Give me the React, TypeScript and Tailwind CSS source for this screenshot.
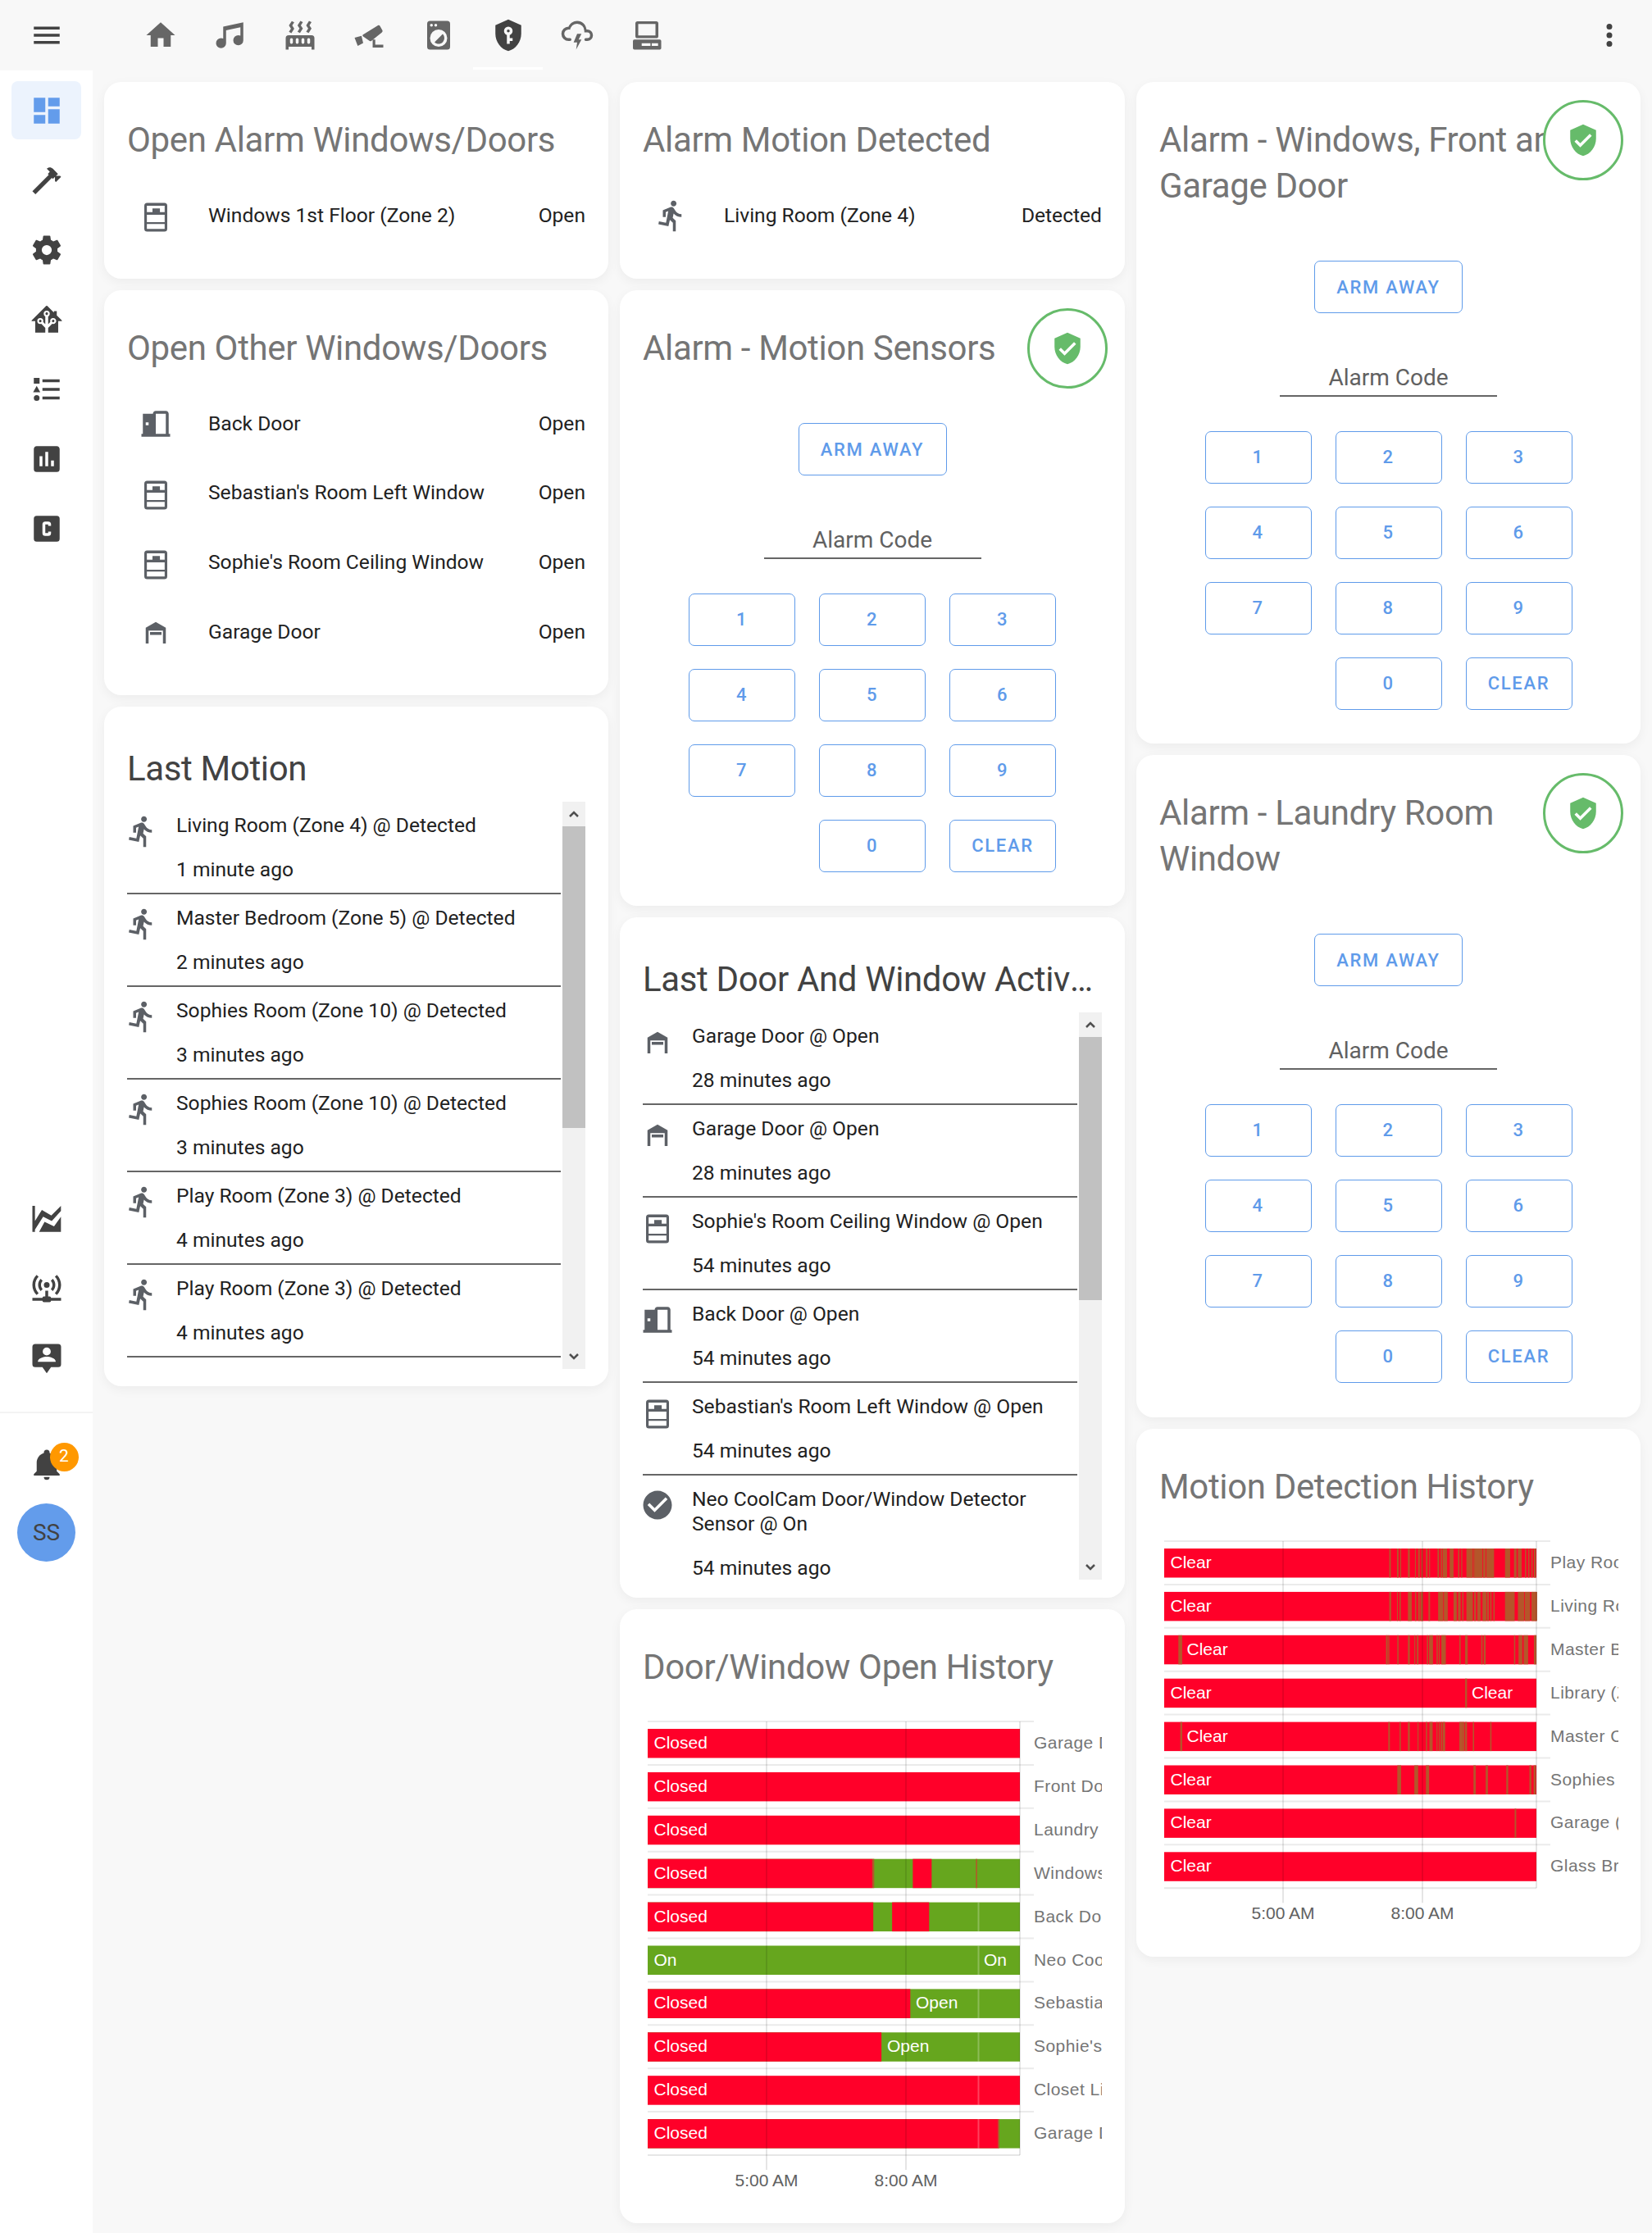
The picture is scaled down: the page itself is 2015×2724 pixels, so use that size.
import React from "react";

const P = {
  menu: "M3,6H21V8H3V6M3,11H21V13H3V11M3,16H21V18H3V16Z",
  home: "M10,20V14H14V20H19V12H22L12,3L2,12H5V20H10Z",
  music: "M21,3V15.5A3.5,3.5 0 0,1 17.5,19A3.5,3.5 0 0,1 14,15.5A3.5,3.5 0 0,1 17.5,12C18.04,12 18.55,12.12 19,12.34V6.47L9,8.6V17.5A3.5,3.5 0 0,1 5.5,21A3.5,3.5 0 0,1 2,17.5A3.5,3.5 0 0,1 5.5,14C6.04,14 6.55,14.12 7,14.34V6L21,3Z",
  radiator: "M7.95,3L6.53,5.19L7.95,7.4H7.94L5.95,10.5L4.22,9.6L5.64,7.39L4.22,5.19L6.22,2.09L7.95,3M13.95,2.89L12.53,5.1L13.95,7.3L13.94,7.31L11.95,10.4L10.22,9.5L11.64,7.3L10.22,5.1L12.22,2L13.95,2.89M20,2.89L18.56,5.1L20,7.3V7.31L18,10.4L16.25,9.5L17.67,7.3L16.25,5.1L18.25,2L20,2.89M2,22V14A2,2 0 0,1 4,12H20A2,2 0 0,1 22,14V22H20V20H4V22H2M6,14A1,1 0 0,0 5,15V17A1,1 0 0,0 6,18A1,1 0 0,0 7,17V15A1,1 0 0,0 6,14M10,14A1,1 0 0,0 9,15V17A1,1 0 0,0 10,18A1,1 0 0,0 11,17V15A1,1 0 0,0 10,14M14,14A1,1 0 0,0 13,15V17A1,1 0 0,0 14,18A1,1 0 0,0 15,17V15A1,1 0 0,0 14,14M18,14A1,1 0 0,0 17,15V17A1,1 0 0,0 18,18A1,1 0 0,0 19,17V15A1,1 0 0,0 18,14Z",
  cctv: "M18.3 5.2c.5-.3 1.1-.1 1.4.3l1.6 2.9c.4.6.2 1.3-.4 1.7L13.6 16c-.5.3-1.1.2-1.5-.3L8 12.8c-.5-.3-.6-1-.1-1.3zM2 13.7l4.8-1.3 1.2 5-3.8 2zM14.6 15h1.8v3.5H22v2h-7.4z",
  washer: "M14.83,11.17C16.39,12.73 16.39,15.27 14.83,16.83C13.27,18.39 10.73,18.39 9.17,16.83L14.83,11.17M6,2H18A2,2 0 0,1 20,4V20A2,2 0 0,1 18,22H6A2,2 0 0,1 4,20V4A2,2 0 0,1 6,2M7,4A1,1 0 0,0 6,5A1,1 0 0,0 7,6A1,1 0 0,0 8,5A1,1 0 0,0 7,4M10,4A1,1 0 0,0 9,5A1,1 0 0,0 10,6A1,1 0 0,0 11,5A1,1 0 0,0 10,4M12,8A6,6 0 0,0 6,14A6,6 0 0,0 12,20A6,6 0 0,0 18,14A6,6 0 0,0 12,8Z",
  shieldKey: "M12,8A1,1 0 0,1 13,9A1,1 0 0,1 12,10A1,1 0 0,1 11,9A1,1 0 0,1 12,8M21,11C21,16.55 17.16,21.74 12,23C6.84,21.74 3,16.55 3,11V5L12,1L21,5V11M12,6A3,3 0 0,0 9,9C9,10.31 9.83,11.42 11,11.83V18H13V16H15V14H13V11.83C14.17,11.42 15,10.31 15,9A3,3 0 0,0 12,6Z",
  cloud: "M6,16A5,5 0 0,1 1,11A5,5 0 0,1 6,6C7,3.65 9.3,2 12,2C15.43,2 18.24,4.66 18.5,8.03L19,8A4,4 0 0,1 23,12A4,4 0 0,1 19,16H18A1,1 0 0,1 17,15A1,1 0 0,1 18,14H19A2,2 0 0,0 21,12A2,2 0 0,0 19,10H17V9A5,5 0 0,0 12,4C9.5,4 7.45,5.82 7.06,8.19C6.73,8.07 6.37,8 6,8A3,3 0 0,0 3,11A3,3 0 0,0 6,14H7A1,1 0 0,1 8,15A1,1 0 0,1 7,16H6M12,11H15L13,15H15L11.25,22L12,17H9.5L12,11Z",
  desktop: "M5.5 2.3h13a1.5 1.5 0 0 1 1.5 1.5v8.7a1.5 1.5 0 0 1-1.5 1.5h-13A1.5 1.5 0 0 1 4 12.5V3.8a1.5 1.5 0 0 1 1.5-1.5zM6 4.2v8h12v-8zM3.3 15h17.7a1 1 0 0 1 1 1v5a1 1 0 0 1-1 1H3.3a1 1 0 0 1-1-1v-5a1 1 0 0 1 1-1zM8.4 17.5v1.9h6.1v-1.9zM15.4 17.5v1.9h4.4v-1.9z",
  dots: "M12,16A2,2 0 0,1 14,18A2,2 0 0,1 12,20A2,2 0 0,1 10,18A2,2 0 0,1 12,16M12,10A2,2 0 0,1 14,12A2,2 0 0,1 12,14A2,2 0 0,1 10,12A2,2 0 0,1 12,10M12,4A2,2 0 0,1 14,6A2,2 0 0,1 12,8A2,2 0 0,1 10,6A2,2 0 0,1 12,4Z",
  dash: "M13,3V9H21V3M13,21H21V11H13M3,21H11V15H3M3,13H11V3H3V13Z",
  hammer: "M2 19.63L13.43 8.2L12.72 7.5L14.14 6.07L12 3.89C13.2 2.7 15.09 2.7 16.27 3.89L19.87 7.5L18.45 8.91H21.29L22 9.62L18.45 13.21L17.74 12.5V9.62L16.27 11.04L15.56 10.33L4.13 21.76L2 19.63Z",
  cog: "M12,15.5A3.5,3.5 0 0,1 8.5,12A3.5,3.5 0 0,1 12,8.5A3.5,3.5 0 0,1 15.5,12A3.5,3.5 0 0,1 12,15.5M19.43,12.97C19.47,12.65 19.5,12.33 19.5,12C19.5,11.67 19.47,11.34 19.43,11L21.54,9.37C21.73,9.22 21.78,8.95 21.66,8.73L19.66,5.27C19.54,5.05 19.27,4.96 19.05,5.05L16.56,6.05C16.04,5.66 15.5,5.32 14.87,5.07L14.5,2.42C14.46,2.18 14.25,2 14,2H10C9.75,2 9.54,2.18 9.5,2.42L9.13,5.07C8.5,5.32 7.96,5.66 7.44,6.05L4.95,5.05C4.73,4.96 4.46,5.05 4.34,5.27L2.34,8.73C2.21,8.95 2.27,9.22 2.46,9.37L4.57,11C4.53,11.34 4.5,11.67 4.5,12C4.5,12.33 4.53,12.65 4.57,12.97L2.46,14.63C2.27,14.78 2.21,15.05 2.34,15.27L4.34,18.73C4.46,18.95 4.73,19.03 4.95,18.95L7.44,17.94C7.96,18.34 8.5,18.68 9.13,18.93L9.5,21.58C9.54,21.82 9.75,22 10,22H14C14.25,22 14.46,21.82 14.5,21.58L14.87,18.93C15.5,18.67 16.04,18.34 16.56,17.94L19.05,18.95C19.27,19.03 19.54,18.95 19.66,18.73L21.66,15.27C21.78,15.05 21.73,14.78 21.54,14.63L19.43,12.97Z",
  ha: "M21.8,13H20V21H13V17.67L15.79,14.88L16.5,15C17.66,15 18.6,14.06 18.6,12.9C18.6,11.74 17.66,10.8 16.5,10.8A2.1,2.1 0 0,0 14.4,12.9L14.5,13.61L13,15.13V9.65C13.66,9.29 14.1,8.6 14.1,7.8A2.1,2.1 0 0,0 12,5.7A2.1,2.1 0 0,0 9.9,7.8C9.9,8.6 10.34,9.29 11,9.65V15.13L9.5,13.61L9.6,12.9A2.1,2.1 0 0,0 7.5,10.8A2.1,2.1 0 0,0 5.4,12.9A2.1,2.1 0 0,0 7.5,15L8.21,14.88L11,17.67V21H4V13H2.25C1.83,13 1.42,13 1.42,12.79C1.43,12.57 1.85,12.15 2.28,11.72L11,3C11.33,2.67 11.67,2.33 12,2.33C12.33,2.33 12.67,2.67 13,3L17,7V6H19V9L21.78,11.78C22.18,12.18 22.59,12.59 22.6,12.8C22.6,13 22.2,13 21.8,13M7.5,12A0.9,0.9 0 0,1 8.4,12.9A0.9,0.9 0 0,1 7.5,13.8A0.9,0.9 0 0,1 6.6,12.9A0.9,0.9 0 0,1 7.5,12M16.5,12C17,12 17.4,12.4 17.4,12.9C17.4,13.4 17,13.8 16.5,13.8A0.9,0.9 0 0,1 15.6,12.9A0.9,0.9 0 0,1 16.5,12M12,6.9C12.5,6.9 12.9,7.3 12.9,7.8C12.9,8.3 12.5,8.7 12,8.7C11.5,8.7 11.1,8.3 11.1,7.8C11.1,7.3 11.5,6.9 12,6.9Z",
  list: "M5,9.5L7.5,14H2.5L5,9.5M3,4H7V8H3V4M5,20A2,2 0 0,0 7,18A2,2 0 0,0 5,16A2,2 0 0,0 3,18A2,2 0 0,0 5,20M9,5V7H21V5H9M9,19H21V17H9V19M9,13H21V11H9V13Z",
  poll: "M17,17H15V13H17zM13,17H11V7H13zM9,17H7V10H9zM19,3H5C3.89,3 3,3.89 3,5V19A2,2 0 0,0 5,21H19A2,2 0 0,0 21,19V5C21,3.89 20.1,3 19,3Z",
  cbox: "M11,7A2,2 0 0,0 9,9V15A2,2 0 0,0 11,17H13A2,2 0 0,0 15,15V14H13V15H11V9H13V10H15V9A2,2 0 0,0 13,7H11M5,3H19A2,2 0 0,1 21,5V19A2,2 0 0,1 19,21H5A2,2 0 0,1 3,19V5A2,2 0 0,1 5,3Z",
  area: "M2 3.4h1.8v18.1H2zM3.8 14 8.6 6.3l6.6 3.8 6.7-6.7V7l-6.4 7-6-3-5.7 9zM6.7 21.5l3.8-7 6.6 3.2 4.8-6.7v10.5z",
  network: "M4.93,2.93C3.12,4.74 2,7.24 2,10C2,12.76 3.12,15.26 4.93,17.07L6.34,15.66C4.89,14.22 4,12.22 4,10C4,7.79 4.89,5.78 6.34,4.34L4.93,2.93M19.07,2.93L17.66,4.34C19.11,5.78 20,7.79 20,10C20,12.22 19.11,14.22 17.66,15.66L19.07,17.07C20.88,15.26 22,12.76 22,10C22,7.24 20.88,4.74 19.07,2.93M7.76,5.76C6.67,6.85 6,8.35 6,10C6,11.65 6.67,13.15 7.76,14.24L9.17,12.83C8.45,12.11 8,11.11 8,10C8,8.89 8.45,7.89 9.17,7.17L7.76,5.76M16.24,5.76L14.83,7.17C15.55,7.89 16,8.89 16,10C16,11.11 15.55,12.11 14.83,12.83L16.24,14.24C17.33,13.15 18,11.65 18,10C18,8.35 17.33,6.85 16.24,5.76M12,8A2,2 0 0,0 10,10A2,2 0 0,0 12,12A2,2 0 0,0 14,10A2,2 0 0,0 12,8M11,14V18H10A1,1 0 0,0 9,19H2V21H9A1,1 0 0,0 10,22H14A1,1 0 0,0 15,21H22V19H15A1,1 0 0,0 14,18H13V14H11Z",
  person: "M4 2.5h16a2 2 0 0 1 2 2v12.2a2 2 0 0 1-2 2h-5L12 23l-3-4.3H4a2 2 0 0 1-2-2V4.5a2 2 0 0 1 2-2zM12 5a2.8 2.8 0 1 0 0 5.6A2.8 2.8 0 0 0 12 5zM5.8 15h12.5c0-2.7-4.2-3.6-6.2-3.6s-6.3.9-6.3 3.6z",
  bell: "M21,19V20H3V19L5,17V11C5,7.9 7.03,5.17 10,4.29C10,4.19 10,4.1 10,4A2,2 0 0,1 12,2A2,2 0 0,1 14,4C14,4.1 14,4.19 14,4.29C16.97,5.17 19,7.9 19,11V17L21,19M14,21A2,2 0 0,1 12,23A2,2 0 0,1 10,21",
  run: "M13.5,5.5C14.59,5.5 15.5,4.58 15.5,3.5C15.5,2.38 14.59,1.5 13.5,1.5C12.39,1.5 11.5,2.38 11.5,3.5C11.5,4.58 12.39,5.5 13.5,5.5M9.89,19.38L10.89,15L13,17V23H15V15.5L12.89,13.5L13.5,10.5C14.79,12 16.79,13 19,13V11C17.09,11 15.5,10 14.69,8.58L13.69,7C13.29,6.38 12.69,6 12,6C11.69,6 11.5,6.08 11.19,6.08L6,8.28V13H8V9.58L9.79,8.88L8.19,17L3.29,16L2.89,18L9.89,19.38Z",
  win: "M6 3.2h12a2 2 0 0 1 2 2v16a2 2 0 0 1-2 2H6a2 2 0 0 1-2-2v-16a2 2 0 0 1 2-2zM5.8 5.1v4.4h3.9V7h5.2v2.5h3.3V5.1zM5.8 11.4v5.2h12.4v-5.2zM5.8 17.9v3.4h12.4v-3.4z",
  door: "M12,3C10.89,3 10,3.89 10,5H3V19H2V21H22V19H21V5C21,3.89 20.11,3 19,3H12M12,5H19V19H12V5M5,11H7V13H5V11Z",
  garage: "M5 20V9l7-4 7 4v11h-2v-9H7v9zM8 12h8v2H8z",
  check: "M12 2C6.5 2 2 6.5 2 12S6.5 22 12 22 22 17.5 22 12 17.5 2 12 2M10 17L5 12L6.41 10.59L10 14.17L17.59 6.58L19 8L10 17Z",
  shieldOk: "M10,17L6,13L7.41,11.59L10,14.17L16.59,7.58L18,9L10,17M12,1L3,5V11C3,16.55 6.84,21.74 12,23C17.16,21.74 21,16.55 21,11V5L12,1Z",
};

function Icon({ d, className = "" }: { d: string; className?: string }) {
  return (
    <svg viewBox="0 0 24 24" className={`w-[42px] h-[42px] shrink-0 fill-current ${className}`}>
      <path d={d} fillRule="evenodd" />
    </svg>
  );
}

function Card({ className = "", children }: { className?: string; children: React.ReactNode }) {
  return (
    <div className={`relative bg-white rounded-[21px] shadow-[0_4px_14px_rgba(0,0,0,0.05)] ${className}`}>{children}</div>
  );
}

function Title({ children, className = "" }: { children: React.ReactNode; className?: string }) {
  return <div className={`text-[42px] leading-[56px] tracking-[-0.35px] text-[#757575] ${className}`}>{children}</div>;
}

function EntityRow({ icon, name, state }: { icon: string; name: string; state: string }) {
  return (
    <div className="flex items-center h-[70px] text-[24.6px] text-[#212121]">
      <div className="w-[70px] flex justify-center text-[#5c6066]">
        <Icon d={icon} />
      </div>
      <div className="ml-[29px] flex-1">{name}</div>
      <div>{state}</div>
    </div>
  );
}

function EntityCard({ title, rows, className }: { title: string; rows: [string, string, string][]; className: string }) {
  return (
    <Card className={`px-[28px] pt-[43px] ${className}`}>
      <Title>{title}</Title>
      <div className="mt-[29px] flex flex-col gap-[14.8px]">
        {rows.map((r, i) => (
          <EntityRow key={i} icon={r[0]} name={r[1]} state={r[2]} />
        ))}
      </div>
    </Card>
  );
}

const btn =
  "flex items-center justify-center h-[64px] border-[1.75px] border-[#5f9bea] rounded-[7px] text-[#5f9bea] text-[22px] font-medium tracking-[1.7px]";

function AlarmCard({ title, className }: { title: React.ReactNode; className: string }) {
  return (
    <Card className={`px-[28px] pt-[43px] ${className}`}>
      <Title className="w-[520px]">{title}</Title>
      <div className="absolute top-[22px] right-[21px] w-[98px] h-[98px] rounded-full bg-white border-[3.5px] border-[#66bb6a] flex items-center justify-center text-[#66bb6a]">
        <Icon d={P.shieldOk} />
      </div>
      <div className={`${btn} w-[181px] mx-auto mt-[63px]`}>ARM AWAY</div>
      <div className="w-[265px] h-[43px] mx-auto mt-[58.5px] border-b-[2px] border-[#666666] text-center text-[28px] leading-[40px] text-[#616161]">
        Alarm Code
      </div>
      <div className="grid grid-cols-[130px_130px_130px] gap-x-[29px] gap-y-[28px] w-fit mx-auto mt-[42px]">
        {["1", "2", "3", "4", "5", "6", "7", "8", "9"].map((k) => (
          <div key={k} className={btn}>{k}</div>
        ))}
        <div className={`${btn} col-start-2`}>0</div>
        <div className={btn}>CLEAR</div>
      </div>
    </Card>
  );
}

function LogItem({ icon, name, ago }: { icon: string; name: string; ago: string }) {
  return (
    <div className="flex h-auto border-b-[2px] border-[#666666] pt-[14px] pb-[13px] text-[24.6px] leading-[30px] text-[#212121] shrink-0">
      <div className="w-[60px] shrink-0 text-[#5c6066]">
        <Icon d={icon} className="-ml-[3px] mt-[1px]" />
      </div>
      <div>
        <div>{name}</div>
        <div className="mt-[24px]">{ago}</div>
      </div>
    </div>
  );
}

function Chevron({ up }: { up?: boolean }) {
  return (
    <div className="h-[30px] flex items-center justify-center shrink-0">
      <svg viewBox="0 0 12 8" className="w-[12px] h-[8px] fill-none stroke-[#505050] stroke-[2.5]">
        <path d={up ? "M1 7l5-5 5 5" : "M1 1l5 5 5-5"} />
      </svg>
    </div>
  );
}

function LogCard({
  title,
  items,
  className,
  thumb,
}: {
  title: string;
  items: [string, string, string][];
  className: string;
  thumb: string;
}) {
  return (
    <Card className={`px-[28px] pt-[48px] ${className}`}>
      <Title className="truncate pr-[8px] !text-[#424242]">{title}</Title>
      <div className="flex mt-[12px] h-[692px]">
        <div className="flex-1 min-w-0 overflow-hidden flex flex-col">
          {items.map((it, i) => (
            <LogItem key={i} icon={it[0]} name={it[1]} ago={it[2]} />
          ))}
        </div>
        <div className="ml-[2px] w-[28px] bg-[#f1f1f1] flex flex-col shrink-0">
          <Chevron up />
          <div className={`bg-[#c1c1c1] ${thumb}`} />
          <div className="flex-1" />
          <Chevron />
        </div>
      </div>
    </Card>
  );
}

type Seg = [number, number, string];
type Row = { label: string; text: [number, string][]; segs: Seg[]; base: string; divider?: boolean };

const RED = "#ff0029";
const GREEN = "#66a61e";
const MIX = "#b4562a";

function Timeline({ rows, height }: { rows: Row[]; height: number }) {
  const X0 = 6;
  const W = 454;
  const bottom = 7 + rows.length * 52.9;
  return (
    <svg width={560} height={height} className="block mt-[31px] font-['Liberation_Sans',sans-serif]">
      {rows.map((_, i) => (
        <line key={i} x1={X0} x2={477} y1={7 + i * 52.9} y2={7 + i * 52.9} stroke="#ebebeb" strokeWidth={2} />
      ))}
      <line x1={X0} x2={X0 + W} y1={bottom} y2={bottom} stroke="#e6e6e6" strokeWidth={2} />
      {rows.map((r, i) => {
        const y = 16 + i * 52.9;
        return (
          <g key={i}>
            <rect x={X0} y={y} width={W} height={35.5} fill={r.base} />
            {r.segs.map((s, j) => (
              <rect key={j} x={X0 + s[0]} y={y} width={s[1]} height={35.5} fill={s[2]} />
            ))}
            {r.divider && <rect x={X0 + 402.5} y={y} width={2} height={35.5} fill="#ffffff" fillOpacity={0.25} />}
            {r.text.map((t, j) => (
              <text key={j} x={X0 + t[0]} y={y + 24} fontSize={21} fill="#ffffff">
                {t[1]}
              </text>
            ))}
            <text x={477} y={y + 24} fontSize={21} fill="#757575" letterSpacing={0.45}>
              {r.label}
            </text>
          </g>
        );
      })}
      {[151, 321, 460].map((x, i) => (
        <line key={x} x1={x} x2={x} y1={7} y2={i === 2 ? bottom : bottom + 18} stroke="#000000" strokeOpacity={0.1} strokeWidth={2} />
      ))}
      <text x={151} y={bottom + 38} fontSize={21} fill="#616161" textAnchor="middle">5:00 AM</text>
      <text x={321} y={bottom + 38} fontSize={21} fill="#616161" textAnchor="middle">8:00 AM</text>
    </svg>
  );
}

const z1 = (a: number, b: number, c: string): Seg => [(a - 78) / 2.613, (b - a) / 2.613, c];
const doorRows: Row[] = [
  { label: "Garage Door", base: RED, text: [[7.5, "Closed"]], segs: [] },
  { label: "Front Door", base: RED, text: [[7.5, "Closed"]], segs: [] },
  { label: "Laundry", base: RED, text: [[7.5, "Closed"]], segs: [] },
  { label: "Windows 1st", base: GREEN, text: [[7.5, "Closed"]], segs: [z1(78, 795, RED), z1(795, 800, MIX), z1(923, 983, RED), z1(1124, 1128, MIX)] },
  { label: "Back Door", base: GREEN, divider: true, text: [[7.5, "Closed"]], segs: [z1(78, 797, RED), z1(857, 975, RED)] },
  { label: "Neo CoolCam", base: GREEN, divider: true, text: [[7.5, "On"], [410, "On"]], segs: [] },
  { label: "Sebastian's", base: GREEN, divider: true, text: [[7.5, "Closed"], [327, "Open"]], segs: [z1(78, 915, RED)] },
  { label: "Sophie's Room", base: GREEN, divider: true, text: [[7.5, "Closed"], [292, "Open"]], segs: [z1(78, 823, RED)] },
  { label: "Closet Light", base: RED, divider: true, text: [[7.5, "Closed"]], segs: [] },
  { label: "Garage Door", base: GREEN, divider: true, text: [[7.5, "Closed"]], segs: [z1(78, 1195, RED), z1(1194, 1199, MIX)] },
];

const ticks = (list: [number, number][]): Seg[] => list.map(([a, w]) => [(a - 48) / 2.55, w / 2.55, MIX]);
const motionRows: Row[] = [
  { label: "Play Room", base: RED, text: [[7.5, "Clear"]], segs: ticks([[748, 5], [772, 5], [782, 3], [806, 6], [828, 3], [838, 5], [848, 4], [862, 5], [872, 3], [898, 5], [908, 4], [914, 14], [936, 12], [962, 4], [972, 3], [988, 20], [1010, 4], [1014, 24], [1040, 8], [1050, 24], [1108, 16], [1136, 8], [1148, 12], [1170, 4], [1180, 4], [1190, 4], [1198, 6]]) },
  { label: "Living Room", base: RED, text: [[7.5, "Clear"]], segs: ticks([[748, 6], [772, 3], [780, 4], [806, 12], [828, 4], [838, 5], [845, 8], [870, 5], [900, 16], [918, 12], [948, 10], [962, 8], [975, 4], [988, 20], [1012, 6], [1022, 10], [1038, 12], [1052, 6], [1062, 4], [1072, 4], [1108, 30], [1148, 20], [1170, 16], [1190, 8], [1198, 10]]) },
  { label: "Master Bedroom", base: RED, text: [[27.5, "Clear"]], segs: ticks([[92, 12], [738, 5], [745, 3], [773, 4], [806, 6], [826, 3], [834, 5], [865, 4], [872, 12], [895, 4], [902, 3], [910, 14], [966, 4], [984, 8], [1034, 4], [1042, 6], [1136, 4], [1150, 12], [1166, 14], [1198, 8]]) },
  { label: "Library (Zone", base: RED, text: [[7.5, "Clear"], [375, "Clear"]], segs: ticks([[984, 6]]) },
  { label: "Master Closet", base: RED, text: [[27.5, "Clear"]], segs: ticks([[98, 6], [745, 5], [780, 4], [806, 6], [836, 3], [862, 4], [873, 10], [895, 3], [902, 3], [908, 4], [914, 8], [966, 12], [978, 4], [984, 6], [1008, 4], [1062, 4]]) },
  { label: "Sophies", base: RED, text: [[7.5, "Clear"]], segs: ticks([[773, 12], [826, 12], [862, 10], [1010, 7], [1048, 7], [1112, 6], [1184, 6], [1197, 7]]) },
  { label: "Garage (Zone", base: RED, text: [[7.5, "Clear"]], segs: ticks([[1138, 5]]) },
  { label: "Glass Break", base: RED, text: [[7.5, "Clear"]], segs: [] },
];

const run = (n: string, a: string): [string, string, string] => [P.run, `${n} @ Detected`, a];
const motionLog: [string, string, string][] = [
  run("Living Room (Zone 4)", "1 minute ago"),
  run("Master Bedroom (Zone 5)", "2 minutes ago"),
  run("Sophies Room (Zone 10)", "3 minutes ago"),
  run("Sophies Room (Zone 10)", "3 minutes ago"),
  run("Play Room (Zone 3)", "4 minutes ago"),
  run("Play Room (Zone 3)", "4 minutes ago"),
];
const doorLog: [string, string, string][] = [
  [P.garage, "Garage Door @ Open", "28 minutes ago"],
  [P.garage, "Garage Door @ Open", "28 minutes ago"],
  [P.win, "Sophie's Room Ceiling Window @ Open", "54 minutes ago"],
  [P.door, "Back Door @ Open", "54 minutes ago"],
  [P.win, "Sebastian's Room Left Window @ Open", "54 minutes ago"],
  [P.check, "Neo CoolCam Door/Window Detector Sensor @ On", "54 minutes ago"],
];

function SideItem({ d, active }: { d: string; active?: boolean }) {
  return (
    <div className="h-[85px] flex items-center justify-center shrink-0">
      {active ? (
        <div className="w-[85px] h-[71px] rounded-[8px] bg-[#ecf3fd] flex items-center justify-center text-[#639ceb]">
          <Icon d={d} />
        </div>
      ) : (
        <Icon d={d} className="text-[#424242]" />
      )}
    </div>
  );
}

export default function App() {
  return (
    <div className="w-[2015px] h-[2724px] overflow-hidden bg-[#f8f8f8] flex flex-col font-['Roboto',sans-serif]">
      <header className="h-[86px] flex items-center shrink-0">
        <div className="w-[113px] flex justify-center text-[#424242]">
          <Icon d={P.menu} />
        </div>
        <div className="ml-[41px] flex">
          {[P.home, P.music, P.radiator, P.cctv, P.washer, P.shieldKey, P.cloud, P.desktop].map((d, i) => (
            <div
              key={i}
              className={`relative w-[84.7px] h-[86px] flex items-center justify-center ${i === 5 ? "text-[#424242]" : "text-[#666666]"}`}
            >
              <Icon d={d} />
              {i === 5 && <div className="absolute bottom-[1px] left-0 right-0 h-[3px] bg-white" />}
            </div>
          ))}
        </div>
        <div className="ml-auto mr-[31px] text-[#424242]">
          <Icon d={P.dots} />
        </div>
      </header>
      <div className="flex flex-1 min-h-0">
        <aside className="w-[113px] bg-white flex flex-col pt-[6px] shrink-0">
          <SideItem d={P.dash} active />
          <SideItem d={P.hammer} />
          <SideItem d={P.cog} />
          <SideItem d={P.ha} />
          <SideItem d={P.list} />
          <SideItem d={P.poll} />
          <SideItem d={P.cbox} />
          <div className="h-[756px] shrink-0" />
          <SideItem d={P.area} />
          <SideItem d={P.network} />
          <SideItem d={P.person} />
          <div className="mt-[24px] h-[2px] bg-[#f3f3f3]" />
          <div className="h-[85px] mt-[19px] flex items-center justify-center shrink-0">
            <div className="relative">
              <Icon d={P.bell} className="text-[#424242]" />
              <div className="absolute -top-[5px] left-[25px] w-[35px] h-[35px] rounded-full bg-[#ff9800] text-white text-[21px] flex items-center justify-center">
                2
              </div>
            </div>
          </div>
          <div className="mt-[6px] mx-auto w-[71px] h-[71px] rounded-full bg-[#639ceb] text-[#424242] text-[28px] flex items-center justify-center">
            SS
          </div>
        </aside>
        <main className="flex gap-[14px] pl-[14px] pt-[14px]">
          <div className="w-[615px] flex flex-col gap-[14px]">
            <EntityCard className="h-[240px]" title="Open Alarm Windows/Doors" rows={[[P.win, "Windows 1st Floor (Zone 2)", "Open"]]} />
            <EntityCard
              className="h-[494px]"
              title="Open Other Windows/Doors"
              rows={[
                [P.door, "Back Door", "Open"],
                [P.win, "Sebastian's Room Left Window", "Open"],
                [P.win, "Sophie's Room Ceiling Window", "Open"],
                [P.garage, "Garage Door", "Open"],
              ]}
            />
            <LogCard className="h-[829px]" title="Last Motion" items={motionLog} thumb="h-[368px]" />
          </div>
          <div className="w-[616px] flex flex-col gap-[14px]">
            <EntityCard className="h-[240px]" title="Alarm Motion Detected" rows={[[P.run, "Living Room (Zone 4)", "Detected"]]} />
            <AlarmCard className="h-[751px]" title="Alarm - Motion Sensors" />
            <LogCard className="h-[830px]" title="Last Door And Window Activity" items={doorLog} thumb="h-[321px]" />
            <Card className="h-[749px] px-[28px] pt-[43px]">
              <Title>Door/Window Open History</Title>
              <Timeline rows={doorRows} height={600} />
            </Card>
          </div>
          <div className="w-[615px] flex flex-col gap-[14px]">
            <AlarmCard className="h-[807px]" title="Alarm - Windows, Front and Garage Door" />
            <AlarmCard className="h-[808px]" title="Alarm - Laundry Room Window" />
            <Card className="h-[644px] px-[28px] pt-[43px]">
              <Title>Motion Detection History</Title>
              <Timeline rows={motionRows} height={490} />
            </Card>
          </div>
        </main>
      </div>
    </div>
  );
}
